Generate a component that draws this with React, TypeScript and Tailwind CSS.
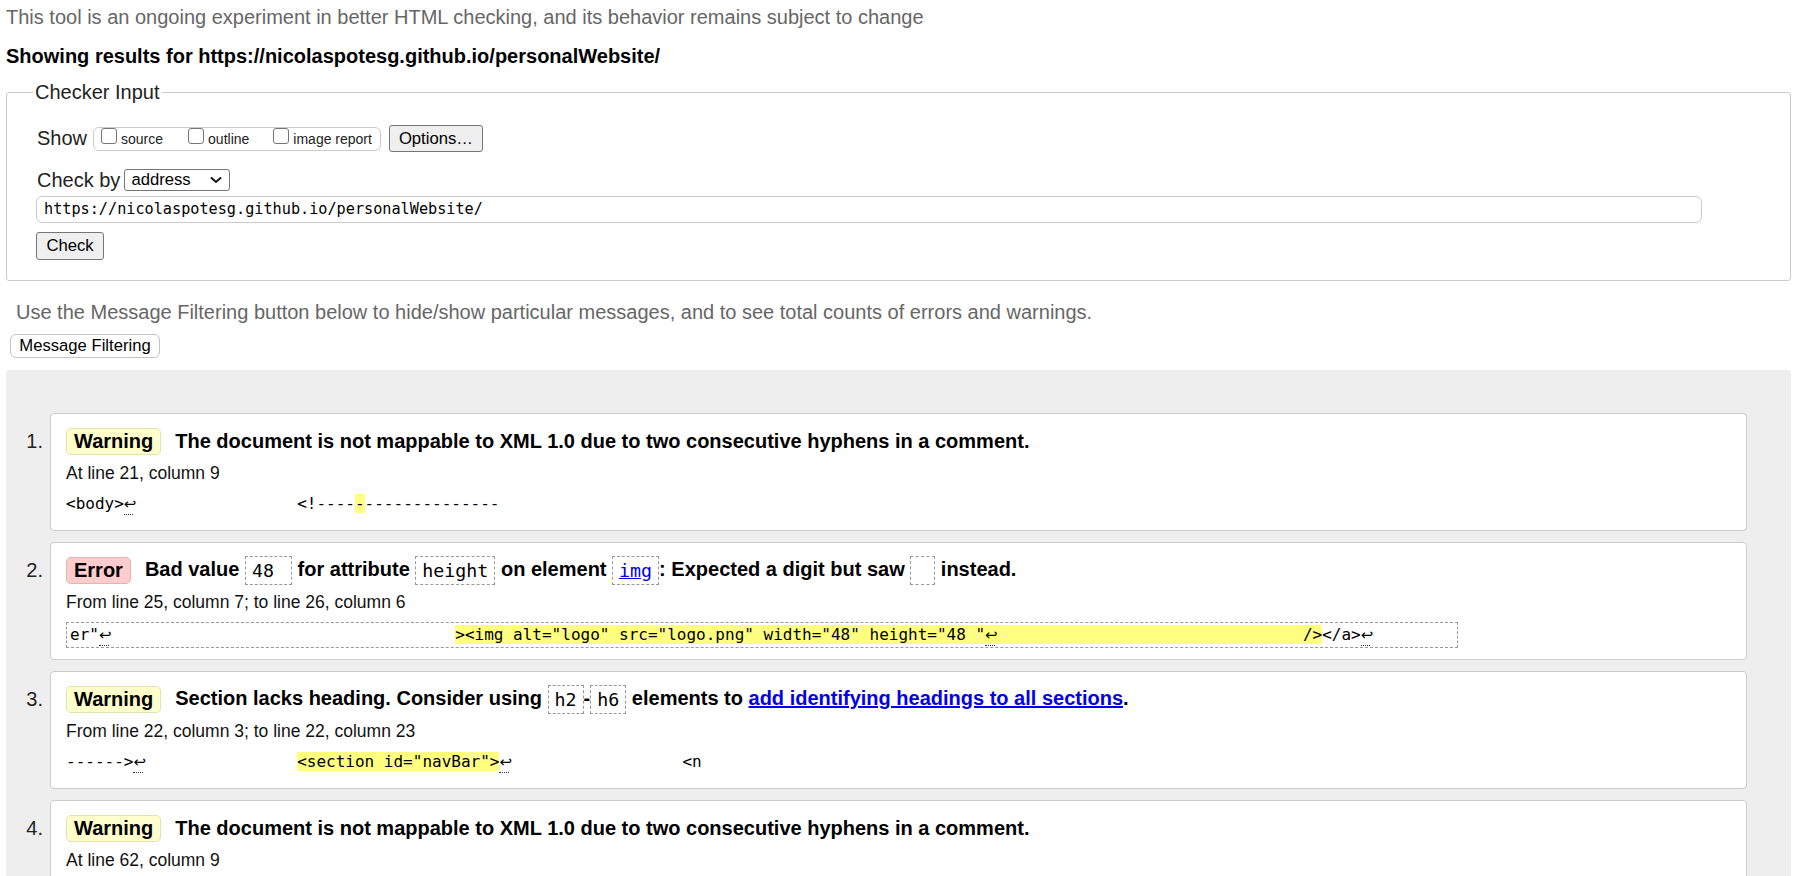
import type { ReactNode } from 'react';

const Ret = () => (
  <span className="inline-block w-[9.6px] border-b border-dotted border-[#333] text-center font-['DejaVu_Sans',sans-serif] text-[15px] leading-[19px]">
    ↩
  </span>
);

const Hl = ({ children }: { children: ReactNode }) => <span className="bg-[#ffff80]">{children}</span>;

const Box = ({ children, link }: { children: ReactNode; link?: boolean }) => (
  <code
    className={
      link
        ? "inline-block border border-dashed border-[#999] px-[6px] align-middle font-['DejaVu_Sans_Mono',monospace] text-[18.3px] font-normal leading-[27px] whitespace-pre text-[#0000ee] underline"
        : "inline-block border border-dashed border-[#999] px-[6px] align-middle font-['DejaVu_Sans_Mono',monospace] text-[18.3px] font-normal leading-[27px] whitespace-pre"
    }
  >
    {children}
  </code>
);

const sp = (n: number) => ' '.repeat(n);

type Msg = {
  kind: 'Warning' | 'Error';
  title: ReactNode;
  location: string;
  extract?: ReactNode;
  boxed?: boolean;
};

const messages: Msg[] = [
  {
    kind: 'Warning',
    title: 'The document is not mappable to XML 1.0 due to two consecutive hyphens in a comment.',
    location: 'At line 21, column 9',
    extract: (
      <>
        {'<body>'}
        <Ret />
        {sp(17)}
        {'<!----'}
        <Hl>-</Hl>
        {'-'.repeat(14)}
      </>
    ),
  },
  {
    kind: 'Error',
    title: (
      <>
        Bad value <Box>48 </Box> for attribute <Box>height</Box> on element{' '}
        <a className="text-[#0000ee] underline">
          <Box link>img</Box>
        </a>
        : Expected a digit but saw <Box> </Box> instead.
      </>
    ),
    location: 'From line 25, column 7; to line 26, column 6',
    boxed: true,
    extract: (
      <>
        {'er"'}
        <Ret />
        {sp(36)}
        <Hl>
          {'><img alt="logo" src="logo.png" width="48" height="48 "'}
          <Ret />
          {sp(32)}
          {'/>'}
        </Hl>
        {'</a>'}
        <Ret />
        {sp(9)}
      </>
    ),
  },
  {
    kind: 'Warning',
    title: (
      <>
        Section lacks heading. Consider using <Box>h2</Box>-<Box>h6</Box> elements to{' '}
        <a className="text-[#0000ee] underline">add identifying headings to all sections</a>.
      </>
    ),
    location: 'From line 22, column 3; to line 22, column 23',
    extract: (
      <>
        {'------>'}
        <Ret />
        {sp(16)}
        <Hl>{'<section id="navBar">'}</Hl>
        <Ret />
        {sp(18)}
        {'<n'}
      </>
    ),
  },
  {
    kind: 'Warning',
    title: 'The document is not mappable to XML 1.0 due to two consecutive hyphens in a comment.',
    location: 'At line 62, column 9',
  },
];

function Badge({ kind }: { kind: Msg['kind'] }) {
  return (
    <span
      className={
        kind === 'Error'
          ? 'shrink-0 rounded-[5px] border border-[#e2b4b4] bg-[#ffcccc] px-[7px] text-[20px] font-bold leading-[25px]'
          : 'shrink-0 rounded-[5px] border border-[#e2e2b0] bg-[#ffffcc] px-[7px] text-[20px] font-bold leading-[25px]'
      }
    >
      {kind}
    </span>
  );
}

export default function App() {
  return (
    <div className="min-h-[876px] bg-white pl-[6px] pr-[27px] font-['Liberation_Sans',Arial,sans-serif] text-black">
      <p className="pt-[6px] text-[20px] leading-[23px] text-[#666]">
        This tool is an ongoing experiment in better HTML checking, and its behavior remains subject to change
      </p>
      <p className="mt-[16px] text-[20px] font-bold leading-[23px]">
        Showing results for https://nicolaspotesg.github.io/personalWebsite/
      </p>

      <fieldset className="mt-[13px] rounded-[3px] border border-[#cccccc] px-[30px] pt-[21px] pb-[20px]">
        <legend className="-ml-[4px] px-[2px] text-[20px] leading-[23px] text-[#222]">Checker Input</legend>

        <div className="flex h-[27px] items-center">
          <span className="text-[20px] leading-[23px] text-[#222]">Show</span>
          <div className="ml-[6px] h-[24px] whitespace-nowrap rounded-[6px] border border-[#cccccc] pl-[7px] pr-[8px] text-[14px] leading-[22px] text-[#222]">
            <span className="inline-block h-[16px] w-[16px] rounded-[3px] border border-[#767676] bg-white" />
            <span className="ml-[4px] mr-[25px]">source</span>
            <span className="inline-block h-[16px] w-[16px] rounded-[3px] border border-[#767676] bg-white" />
            <span className="ml-[4px] mr-[24px]">outline</span>
            <span className="inline-block h-[16px] w-[16px] rounded-[3px] border border-[#767676] bg-white" />
            <span className="ml-[4px]">image report</span>
          </div>
          <button className="ml-[8px] h-[27px] w-[94px] rounded-[3px] border border-[#767676] bg-[#efefef] text-[16.67px] leading-[20px]">
            Options…
          </button>
        </div>

        <div className="mt-[17px] flex h-[22px] items-center">
          <span className="text-[20px] leading-[23px] text-[#222]">Check by</span>
          <div className="ml-[4px] flex h-[22px] w-[106px] items-center justify-between rounded-[3px] border border-[#767676] bg-white pl-[6px] pr-[7px] text-[16.67px] leading-[20px]">
            <span>address</span>
            <svg width="12" height="8" viewBox="0 0 12 8" fill="none">
              <polyline points="1,1.5 6,6 11,1.5" stroke="#111" strokeWidth="2" />
            </svg>
          </div>
        </div>

        <div className="-ml-[1px] mt-[5px] flex h-[27px] w-[1666px] items-center rounded-[6px] border border-[#cccccc] pl-[7px] font-['DejaVu_Sans_Mono',monospace] text-[15.2px]">
          https://nicolaspotesg.github.io/personalWebsite/
        </div>

        <button className="-ml-[1px] mt-[9px] block h-[28px] w-[68px] rounded-[3px] border border-[#767676] bg-[#efefef] text-[16.67px] leading-[20px]">
          Check
        </button>
      </fieldset>

      <p className="mt-[20px] pl-[10px] text-[20px] leading-[23px] text-[#666]">
        Use the Message Filtering button below to hide/show particular messages, and to see total counts of errors and warnings.
      </p>
      <button className="ml-[4px] mt-[10px] block h-[24px] w-[150px] rounded-[6px] border border-[#c4c4c4] bg-white text-[16.67px] leading-[20px]">
        Message Filtering
      </button>

      <div className="mt-[12px] rounded-[3px] bg-[#eeeeee] pb-[40px] pr-[44px] pt-[43px]">
        <ol className="flex flex-col gap-[11px]">
          {messages.map((m, i) => (
            <li key={i} className="flex">
              <span className="w-[44px] shrink-0 pr-[7px] pt-[14px] text-right text-[20px] leading-[28px] text-[#222]">
                {i + 1}.
              </span>
              <div className="h-[118px] flex-1 rounded-[4px] border border-[#cccccc] bg-white px-[15px] pt-[13px]">
                <div className="flex h-[28px] items-center">
                  <Badge kind={m.kind} />
                  <div className="ml-[14px] whitespace-nowrap text-[20px] font-bold leading-[28px]">{m.title}</div>
                </div>
                <div className="mt-[6px] text-[17.5px] leading-[24px] text-[#111]">{m.location}</div>
                {m.extract &&
                  (m.boxed ? (
                    <div className="mt-[8px]">
                      <code className="inline-block border border-dashed border-[#999] pl-[3px] font-['DejaVu_Sans_Mono',monospace] text-[16px] leading-[24px] whitespace-pre">
                        {m.extract}
                      </code>
                    </div>
                  ) : (
                    <div className="mt-[6px] font-['DejaVu_Sans_Mono',monospace] text-[16px] leading-[26px] whitespace-pre">
                      {m.extract}
                    </div>
                  ))}
              </div>
            </li>
          ))}
        </ol>
      </div>
    </div>
  );
}
